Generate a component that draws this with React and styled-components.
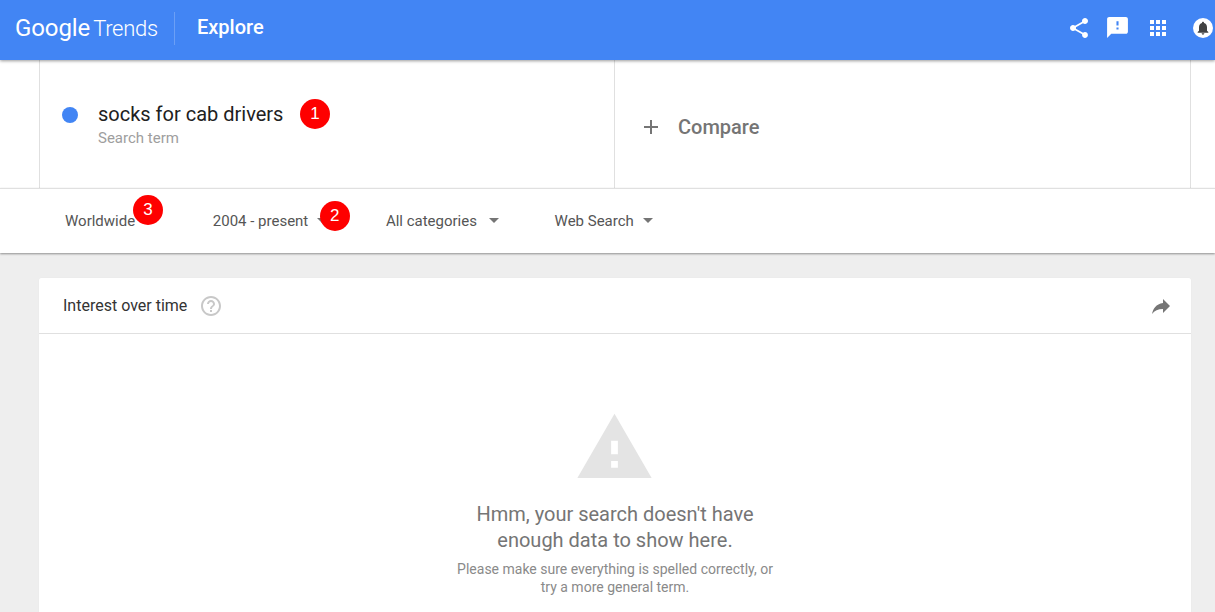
import React from "react";
import styled, { createGlobalStyle } from "styled-components";

const Global = createGlobalStyle`
  html, body { margin: 0; padding: 0; height: 612px; overflow: hidden; background: #eeeeee; }
  body { font-family: Roboto, "Liberation Sans", sans-serif; }
`;
const Page = styled.div`width: 1215px; height: 612px; overflow: hidden; display: flex; flex-direction: column;`;
const Header = styled.header`
  height: 60px; flex: none; background: #4285f4; display: flex; align-items: center; color: #fff;
  padding-left: 15px; box-shadow: 0 1px 3px rgba(0,0,0,.4); position: relative; z-index: 2; box-sizing: border-box;
`;
const Logo = styled.div`
  width: 159px; height: 54px; display: flex; align-items: baseline; gap: 3px; line-height: 50px; font-size: 22px; font-weight: 300; letter-spacing: -0.3px;
`;
const LogoMark = styled.span`font-size: 24px; font-weight: 400; letter-spacing: -0.1px;`;
const Divider = styled.div`width: 1px; height: 33px; background: rgba(255,255,255,.22); margin-top: -4px;`;
const Title = styled.div`margin-left: 22px; font-size: 20px; font-weight: 500; margin-top: -6px;`;
const Actions = styled.div`margin-left: auto; display: flex; align-items: center; margin-top: -5px; margin-right: 2px;`;
const ActionSlot = styled.div`margin-right: ${p => p.$gap}px;`;
const Bell = styled.div`
  width: 20px; height: 20px; border-radius: 50%; background: #fff; display: flex; align-items: center; justify-content: center;
`;
const Icon = styled.svg`flex: none; display: block; fill: ${p => p.$color || "#fff"};`;

const Terms = styled.section`background: #fff; height: 128px; flex: none; padding: 0 24px 0 39px; display: flex; box-sizing: border-box;`;
const TermCell = styled.div`
  border-left: 1px solid #e0e0e0; display: flex; box-sizing: border-box; position: relative; width: 575px; flex: none;
  &:last-child { border-right: 1px solid #e0e0e0; width: 577px; }
`;
const Term = styled.div`display: flex; align-items: flex-start; padding: 41px 0 0 22px;`;
const Dot = styled.div`width: 16px; height: 16px; border-radius: 50%; background: #4285f4; margin: 6px 20px 0 0;`;
const TermName = styled.div`font-size: 20px; line-height: 26px; color: #212121;`;
const TermSub = styled.div`font-size: 15px; line-height: 20px; color: #9e9e9e; margin-top: 1px;`;
const Compare = styled.div`display: flex; align-items: center; padding: 6px 0 0 24px; font-size: 20px; font-weight: 500; color: #757575; gap: 15px;`;
const Filters = styled.nav`
  background: #fff; height: 65px; flex: none; border-top: 1px solid #e0e0e0; box-sizing: border-box; display: flex; align-items: center;
  padding-left: 65px; padding-bottom: 1px; gap: 58.6px; box-shadow: 0 1px 2px rgba(0,0,0,.4); position: relative; z-index: 1;
`;
const Filter = styled.div`display: flex; align-items: center; gap: 9px; font-size: 15px; color: #555; position: relative; line-height: 20px;`;
const Arrow = styled.div`
  width: 0; height: 0; border-left: 5px solid transparent; border-right: 5px solid transparent; border-top: 5px solid #757575;
  margin: 0 ${p => -(p.$shift || 0)}px 0 ${p => p.$shift || 0}px;
`;
const Badge = styled.div`
  position: absolute; left: ${p => p.$x}px; top: ${p => p.$y}px; width: 30px; height: 30px; border-radius: 50%; background: #fe0000; color: #fff;
  font: 17px/30px "Liberation Sans", sans-serif; text-align: center; z-index: 3;
`;
const Main = styled.main`flex: 1; padding: 25px 24px 0 39px; min-height: 0;`;
const Card = styled.section`background: #fff; border-radius: 2px 2px 0 0; height: 400px; box-shadow: 0 0 1px rgba(0,0,0,.08);`;
const CardHead = styled.div`
  height: 56px; box-sizing: border-box; border-bottom: 1px solid #e0e0e0; display: flex; align-items: center; padding: 0 18px 0 24px;
  font-size: 16px; color: #333; gap: 12px;
  svg:last-child { margin-left: auto; }
`;
const Empty = styled.div`display: flex; flex-direction: column; align-items: center; padding-top: 73px;`;
const WarningMark = styled.div`margin-right: 2px;`;
const EmptyTitle = styled.div`font-size: 20px; line-height: 26px; color: #757575; text-align: center; margin-top: 13px;`;
const EmptySub = styled.div`font-size: 14px; line-height: 18px; color: #8a8a8a; text-align: center; margin-top: 7px;`;

const P = ({ d, size = 24, color }) => <Icon $color={color} width={size} height={size} viewBox="0 0 24 24"><path d={d} /></Icon>;

export default function App() {
  return (
    <Page>
      <Global />
      <Header>
        <Logo><LogoMark>Google</LogoMark><span>Trends</span></Logo>
        <Divider />
        <Title>Explore</Title>
        <Actions>
          <ActionSlot $gap={14}><P d="M18 16.08c-.76 0-1.44.3-1.96.77L8.91 12.7c.05-.23.09-.46.09-.7s-.04-.47-.09-.7l7.05-4.11c.54.5 1.25.81 2.04.81 1.66 0 3-1.34 3-3s-1.34-3-3-3-3 1.34-3 3c0 .24.04.47.09.7L8.04 9.81C7.5 9.31 6.79 9 6 9c-1.66 0-3 1.34-3 3s1.34 3 3 3c.79 0 1.5-.31 2.04-.81l7.12 4.16c-.05.21-.08.43-.08.65 0 1.61 1.31 2.92 2.92 2.92 1.61 0 2.92-1.31 2.92-2.92s-1.31-2.92-2.92-2.92z" /></ActionSlot>
          <ActionSlot $gap={16}><P size={25} d="M20 2H4c-1.1 0-1.99.9-1.99 2L2 22l4-4h14c1.1 0 2-.9 2-2V4c0-1.1-.9-2-2-2zm-7 12h-2v-2h2v2zm0-4h-2V6h2v4z" /></ActionSlot>
          <ActionSlot $gap={23}><P d="M4 8h4V4H4v4zm6 12h4v-4h-4v4zm-6 0h4v-4H4v4zm0-6h4v-4H4v4zm6 0h4v-4h-4v4zm6-10v4h4V4h-4zm-6 4h4V4h-4v4zm6 6h4v-4h-4v4zm0 6h4v-4h-4v4z" /></ActionSlot>
          <Bell><P size={16} color="#424242" d="M12 22c1.1 0 2-.9 2-2h-4c0 1.1.89 2 2 2zm6-6v-5c0-3.07-1.64-5.64-4.5-6.32V4c0-.83-.67-1.5-1.5-1.5s-1.5.67-1.5 1.5v.68C7.63 5.36 6 7.92 6 11v5l-2 2v1h16v-1l-2-2z" /></Bell>
        </Actions>
      </Header>
      <Terms>
        <TermCell>
          <Term>
            <Dot />
            <div>
              <TermName>socks for cab drivers</TermName>
              <TermSub>Search term</TermSub>
            </div>
          </Term>
          <Badge $x={260} $y={39}>1</Badge>
        </TermCell>
        <TermCell>
          <Compare>
            <P color="#757575" d="M19 13h-6v6h-2v-6H5v-2h6V5h2v6h6v2z" />
            Compare
          </Compare>
        </TermCell>
      </Terms>
      <Filters>
        <Filter>Worldwide<Arrow /><Badge $x={68} $y={-16}>3</Badge></Filter>
        <Filter>2004 - present<Arrow /><Badge $x={107} $y={-10}>2</Badge></Filter>
        <Filter>All categories<Arrow $shift={3} /></Filter>
        <Filter>Web Search<Arrow /></Filter>
      </Filters>
      <Main>
        <Card>
          <CardHead>
            Interest over time
            <P color="#c8c8c8" d="M11 18h2v-2h-2v2zm1-16C6.48 2 2 6.48 2 12s4.48 10 10 10 10-4.48 10-10S17.52 2 12 2zm0 18c-4.41 0-8-3.59-8-8s3.59-8 8-8 8 3.59 8 8-3.59 8-8 8zm0-14c-2.21 0-4 1.79-4 4h2c0-1.1.9-2 2-2s2 .9 2 2c0 2-3 1.75-3 5h2c0-2.25 3-2.5 3-5 0-2.21-1.79-4-4-4z" />
            <P color="#757575" d="M14 9V5l7 7-7 7v-4.1c-5 0-8.5 1.6-11 5.1 1-5 4-10 11-11z" />
          </CardHead>
          <Empty>
            <WarningMark><P size={81} color="#e4e4e4" d="M1 21h22L12 2 1 21zm12-3h-2v-2h2v2zm0-4h-2v-4h2v4z" /></WarningMark>
            <EmptyTitle>Hmm, your search doesn't have<br />enough data to show here.</EmptyTitle>
            <EmptySub>Please make sure everything is spelled correctly, or<br />try a more general term.</EmptySub>
          </Empty>
        </Card>
      </Main>
    </Page>
  );
}
